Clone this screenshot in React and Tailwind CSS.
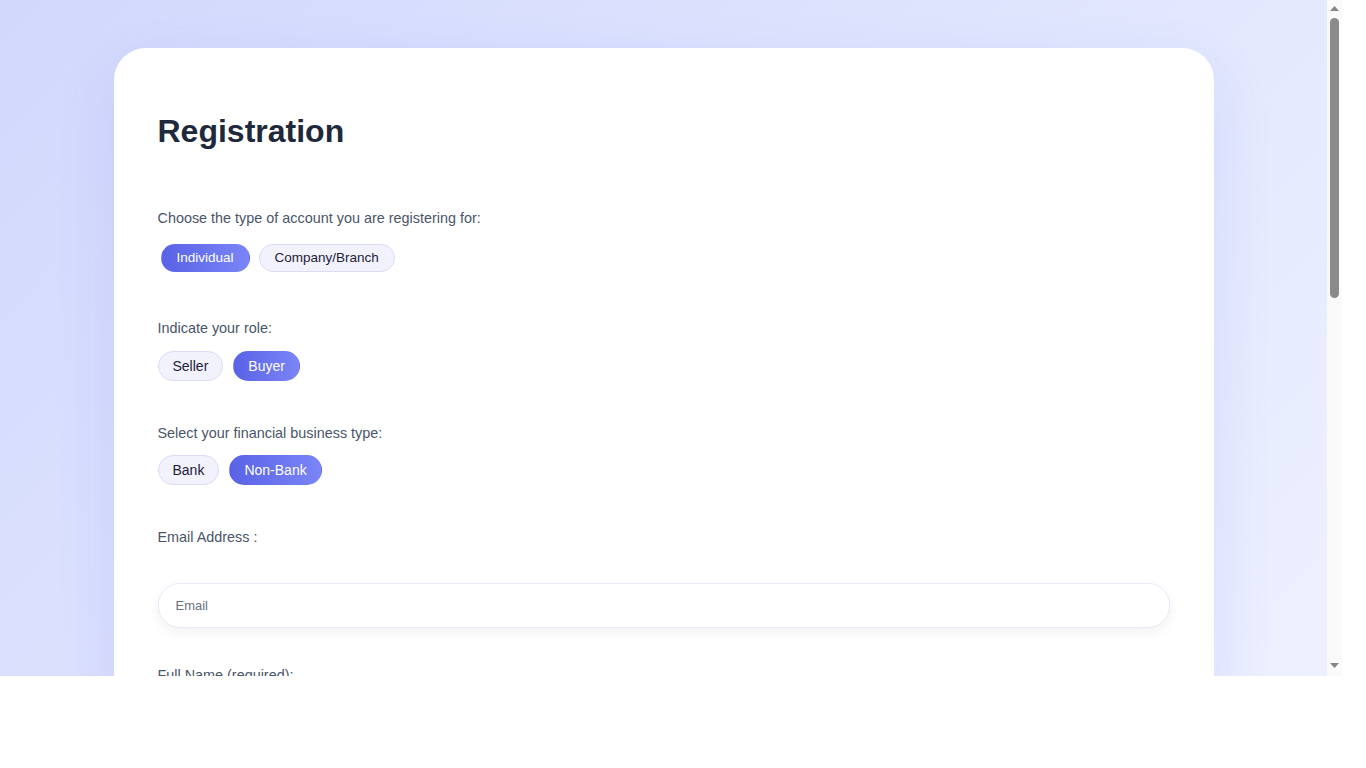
import React, { useState } from 'react'

const Pill = ({ active, label, onClick, small }) => (
  <button
    type="button"
    onClick={onClick}
    className={
      (small
        ? 'px-[15px] py-[3px] text-[13.5px] leading-5 '
        : 'px-3.5 py-1 text-sm leading-5 ') +
      'rounded-full border ' +
      (active
        ? 'border-transparent bg-gradient-to-r from-[#5a62e6] to-[#7b85f7] text-white'
        : 'border-[#dcdbf6] bg-[#f2f2fd] text-[#1f1d3a]')
    }
  >
    {label}
  </button>
)

const Field = ({ label, placeholder, type = 'text', first }) => (
  <div className={first ? 'mt-[37px]' : 'mt-[39px]'}>
    <p className="text-[14.4px] leading-5 text-[#4a5568]">{label}</p>
    <input
      type={type}
      placeholder={placeholder}
      className="mt-9 h-[45px] w-full rounded-[22px] border border-[#ebe9fb] bg-white pl-[17px] text-[13px] text-[#374151] placeholder:text-[#6b7280] shadow-[0_4px_12px_rgba(30,41,59,0.06)] outline-none"
    />
  </div>
)

// полоса прокрутки справа (в скриншоте она видна)
const ScrollStrip = () => (
  <div className="flex h-full w-[15px] shrink-0 flex-col bg-[#fafafa]">
    <div className="flex h-[15px] justify-center pt-[6px]">
      <svg width="9" height="5" viewBox="0 0 9 5"><polygon points="4.5,0 9,5 0,5" fill="#858585" /></svg>
    </div>
    <div className="ml-[3px] mt-[3px] h-[280px] w-[9px] rounded-full bg-[#8b8b8b]" />
    <div className="flex-1" />
    <div className="flex h-[15px] justify-center pt-[2px]">
      <svg width="9" height="5" viewBox="0 0 9 5"><polygon points="0,0 9,0 4.5,5" fill="#858585" /></svg>
    </div>
  </div>
)

const App = () => {
  const [account, setAccount] = useState('Individual')
  const [role, setRole] = useState('Buyer')
  const [bizType, setBizType] = useState('Non-Bank')

  return (
    <div className="flex h-[676px] w-[1342px] font-['Liberation_Sans',Arial,sans-serif]">
      <div className="h-full flex-1 overflow-y-auto">
        <div className="min-h-full bg-gradient-to-br from-[#d1d8fc] via-[#e4e9fe] to-[#f6f8ff] py-12">
          {/* карточка регистрации */}
          <div className="mx-auto w-[1100px] rounded-[32px] bg-white px-11 pt-16 pb-12 shadow-[0_24px_60px_rgba(99,102,241,0.14)]">
            <h1 className="text-[32px] leading-[38px] font-bold text-[#1e293b]">Registration</h1>

            <div className="mt-[58px]">
              <p className="text-[14.4px] leading-5 text-[#4a5568]">Choose the type of account you are registering for:</p>
              <div className="mt-4 ml-[3px] flex gap-[9px]">
                {['Individual', 'Company/Branch'].map(item => (
                  <Pill key={item} small label={item} active={account === item} onClick={() => setAccount(item)} />
                ))}
              </div>
            </div>

            <div className="mt-[46px]">
              <p className="text-[14.4px] leading-5 text-[#4a5568]">Indicate your role:</p>
              <div className="mt-[13px] flex gap-2.5">
                {['Seller', 'Buyer'].map(item => (
                  <Pill key={item} label={item} active={role === item} onClick={() => setRole(item)} />
                ))}
              </div>
            </div>

            <div className="mt-[42px]">
              <p className="text-[14.4px] leading-5 text-[#4a5568]">Select your financial business type:</p>
              <div className="mt-3 flex gap-2.5">
                {['Bank', 'Non-Bank'].map(item => (
                  <Pill key={item} label={item} active={bizType === item} onClick={() => setBizType(item)} />
                ))}
              </div>
            </div>

            <div className="mt-[42px]">
              <p className="text-[14.4px] leading-5 text-[#4a5568]">Email Address :</p>
              <input
                type="email"
                placeholder="Email"
                className="mt-9 h-[45px] w-full rounded-[22px] border border-[#ebe9fb] bg-white pl-[17px] text-[13px] text-[#374151] placeholder:text-[#6b7280] shadow-[0_4px_12px_rgba(30,41,59,0.06)] outline-none"
              />
            </div>

            <Field first label="Full Name (required):" placeholder="Full Name" />
            <Field label="Phone Number :" placeholder="Phone" />
            <Field label="Password (required):" placeholder="Password" type="password" />
            <Field label="Confirm Password (required):" placeholder="Confirm Password" type="password" />

            <button
              type="button"
              className="mt-12 h-[45px] w-full rounded-[22px] bg-gradient-to-r from-[#5a62e6] to-[#7b85f7] text-[15px] font-bold text-white"
            >
              Register
            </button>
          </div>
        </div>
      </div>
      <ScrollStrip />
    </div>
  )
}

export default App
